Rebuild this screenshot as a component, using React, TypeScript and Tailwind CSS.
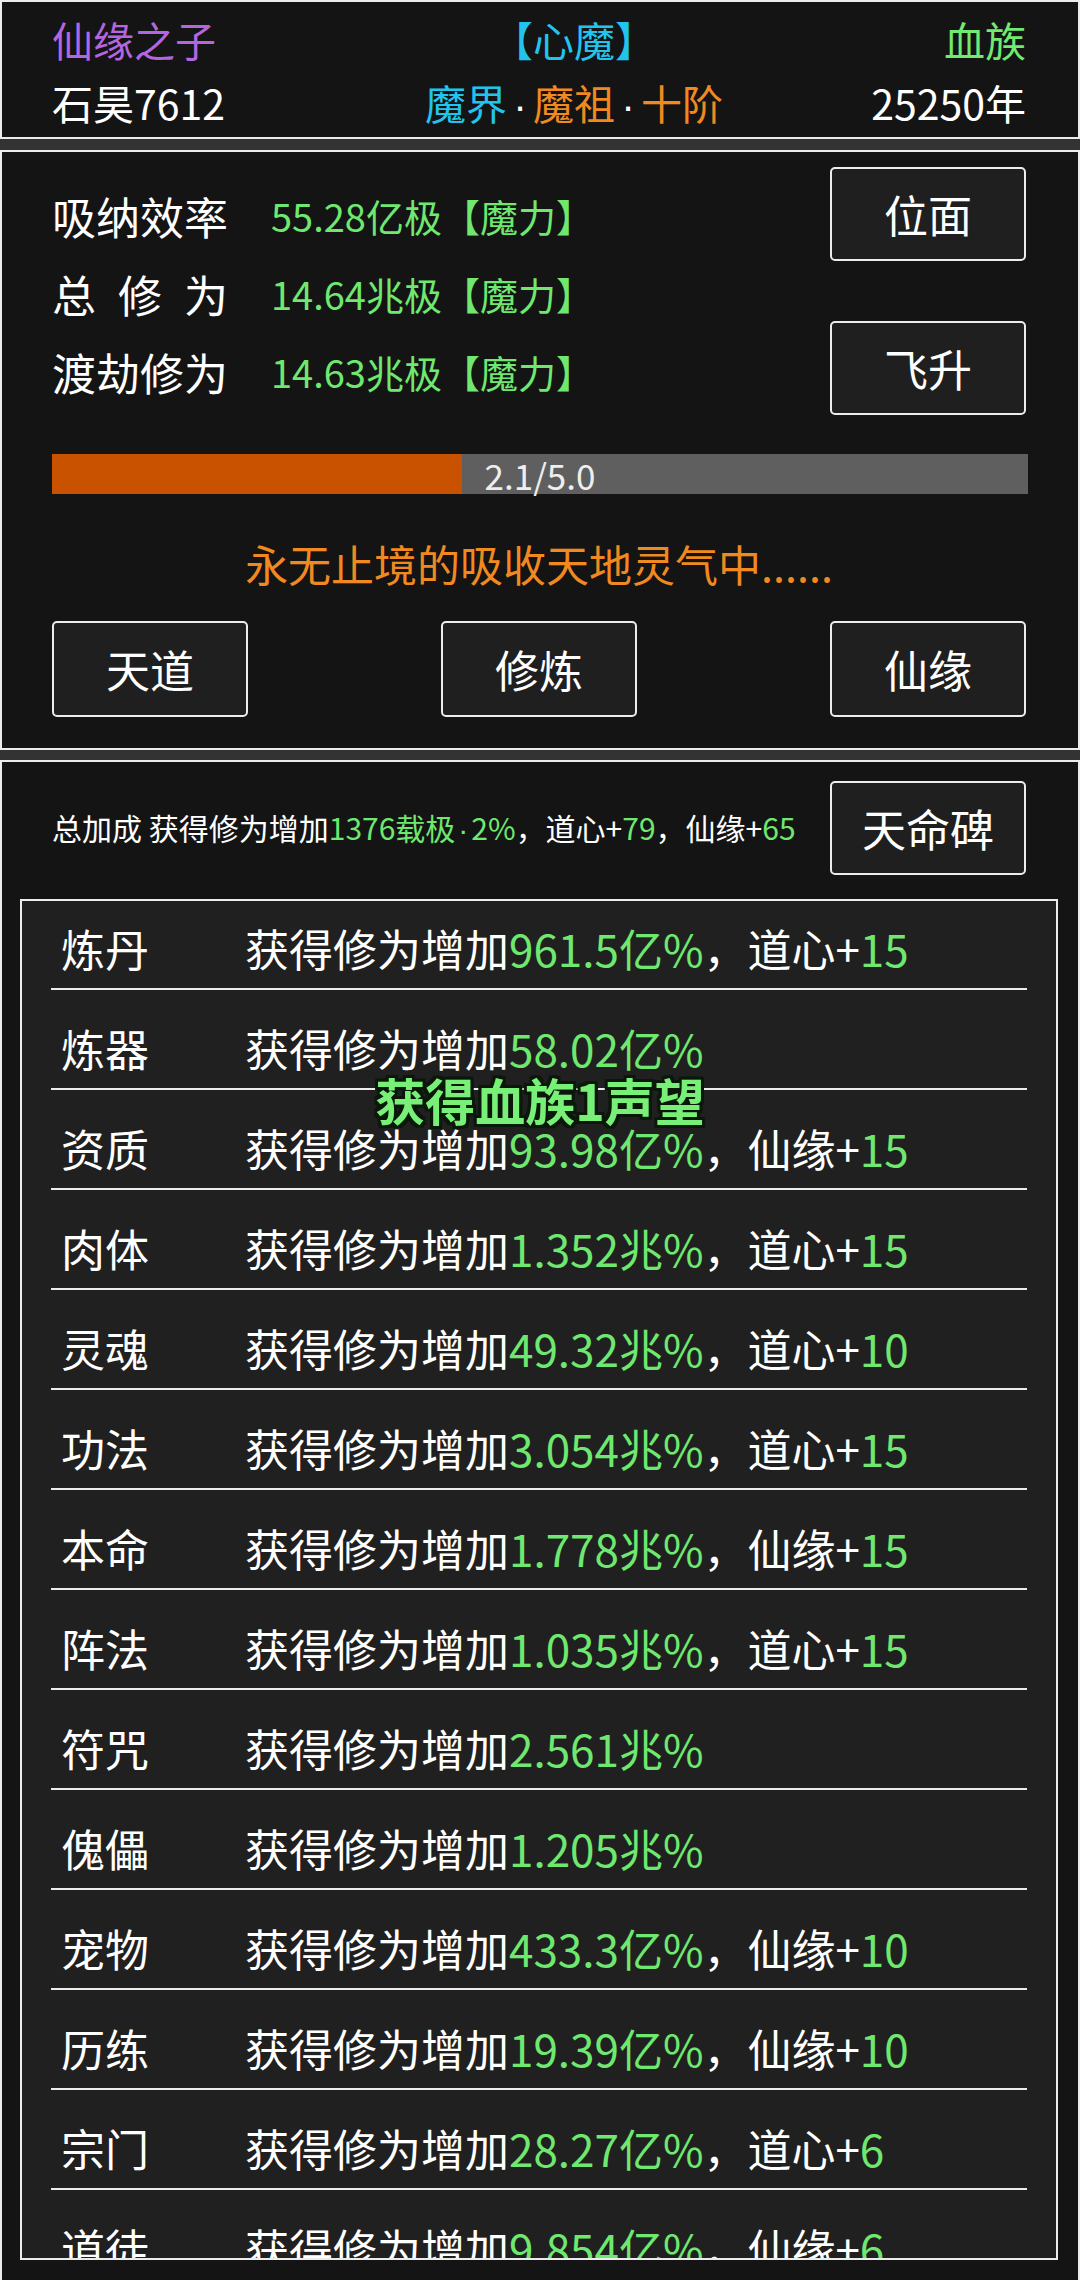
import React from 'react';

type Bonus = { name: string; value: string; extra?: string; extraValue?: string };

const bonuses: Bonus[] = [
  { name: '炼丹', value: '961.5亿%', extra: '道心+', extraValue: '15' },
  { name: '炼器', value: '58.02亿%' },
  { name: '资质', value: '93.98亿%', extra: '仙缘+', extraValue: '15' },
  { name: '肉体', value: '1.352兆%', extra: '道心+', extraValue: '15' },
  { name: '灵魂', value: '49.32兆%', extra: '道心+', extraValue: '10' },
  { name: '功法', value: '3.054兆%', extra: '道心+', extraValue: '15' },
  { name: '本命', value: '1.778兆%', extra: '仙缘+', extraValue: '15' },
  { name: '阵法', value: '1.035兆%', extra: '道心+', extraValue: '15' },
  { name: '符咒', value: '2.561兆%' },
  { name: '傀儡', value: '1.205兆%' },
  { name: '宠物', value: '433.3亿%', extra: '仙缘+', extraValue: '10' },
  { name: '历练', value: '19.39亿%', extra: '仙缘+', extraValue: '10' },
  { name: '宗门', value: '28.27亿%', extra: '道心+', extraValue: '6' },
  { name: '道徒', value: '9.854亿%', extra: '仙缘+', extraValue: '6' },
];

const progress = 2.1 / 5.0;

const GameButton: React.FC<{ label: string; className?: string }> = ({ label, className = '' }) => (
  <button
    className={`w-[196px] h-[94px] flex items-center justify-center bg-[#1f1f1f] border-2 border-[#ececec] rounded-[5px] text-[44px] text-white leading-none ${className}`}
  >
    {label}
  </button>
);

// narrow middle dot, the CJK one is full width
const Dot: React.FC<{ className: string }> = ({ className }) => (
  <span className={`inline-block text-center font-['Liberation_Sans',sans-serif] leading-none ${className}`}>·</span>
);

const App: React.FC = () => {
  return (
    <div className="relative w-[1080px] h-[2280px] overflow-hidden bg-[#333333] font-['Noto_Sans_CJK_SC','Noto_Sans',sans-serif] text-white">
      {/* Header */}
      <div className="bg-[#141414] border-2 border-[#ececec] pl-[50px] pr-[52px] pt-[6px] pb-[3px] text-[41px] leading-[63px] whitespace-nowrap">
        <div className="flex h-[63px]">
          <div className="w-[230px] text-[#b466e0]">仙缘之子</div>
          <div className="flex-1 text-center text-[#22c4ee]">【心魔】</div>
          <div className="w-[160px] text-right text-[#72ea72]">血族</div>
        </div>
        <div className="flex h-[63px]">
          <div className="w-[230px]">石昊7612</div>
          <div className="flex-1 text-center">
            <span className="text-[#22c4ee]">魔界</span>
            <Dot className="w-[26px] text-white" />
            <span className="text-[#f08a20]">魔祖</span>
            <Dot className="w-[26px] text-white" />
            <span className="text-[#f08a20]">十阶</span>
          </div>
          <div className="w-[160px] text-right">25250年</div>
        </div>
      </div>

      {/* Cultivation panel */}
      <div className="mt-[11px] bg-[#141414] border-2 border-[#ececec] pl-[50px] pr-[52px] pb-[31px]">
        <div className="flex justify-between">
          <div className="pt-[25px] leading-[78px]">
            <div className="flex items-center">
              <span className="w-[219px] text-[44px]">吸纳效率</span>
              <span className="text-[38px] text-[#6fe86f]">55.28亿极【魔力】</span>
            </div>
            <div className="flex items-center">
              <span className="w-[219px] text-[44px]">
                <span className="flex w-[176px] justify-between">
                  <span>总</span>
                  <span>修</span>
                  <span>为</span>
                </span>
              </span>
              <span className="text-[38px] text-[#6fe86f]">14.64兆极【魔力】</span>
            </div>
            <div className="flex items-center">
              <span className="w-[219px] text-[44px]">渡劫修为</span>
              <span className="text-[38px] text-[#6fe86f]">14.63兆极【魔力】</span>
            </div>
          </div>
          <div className="pt-[15px] flex flex-col gap-[60px]">
            <GameButton label="位面" />
            <GameButton label="飞升" />
          </div>
        </div>

        <div className="relative mt-[39px] mr-[-2px] h-[40px] bg-[#5f5f5f]">
          <div className="h-full bg-[#c85200]" style={{ width: `${progress * 100}%` }}></div>
          <div className="absolute inset-0 flex items-center justify-center text-[35px] text-[#eeeeee] leading-none">
            2.1/5.0
          </div>
        </div>

        <div className="mt-[45px] text-center text-[43px] leading-[48px] text-[#f08a20]">
          永无止境的吸收天地灵气中......
        </div>

        <div className="mt-[34px] flex justify-between">
          <GameButton label="天道" className="h-[96px]" />
          <GameButton label="修炼" className="h-[96px]" />
          <GameButton label="仙缘" className="h-[96px]" />
        </div>
      </div>

      {/* Bonus panel */}
      <div className="mt-[10px] bg-[#141414] border-2 border-[#ececec] pb-[40px]">
        <div className="mt-[19px] pl-[50px] pr-[52px] flex items-center justify-between">
          <div className="text-[30px] leading-none whitespace-nowrap">
            总加成 获得修为增加<span className="text-[#6fe86f]">1376载极</span>
            <Dot className="w-[16px] text-[#6fe86f]" />
            <span className="text-[#6fe86f]">2%</span>，道心+<span className="text-[#6fe86f]">79</span>，仙缘+
            <span className="text-[#6fe86f]">65</span>
          </div>
          <GameButton label="天命碑" />
        </div>

        <div className="mt-[24px] ml-[18px] mr-[20px] h-[1361px] overflow-hidden bg-[#202020] border-2 border-[#ececec]">
          {bonuses.map((b, i) => (
            <div key={b.name} className="mx-[29px]">
              <div className={`${i === 0 ? 'pt-[17px]' : 'pt-[28px]'} pb-[10px] pl-[10px] flex text-[44px] leading-[60px] whitespace-nowrap`}>
                <span className="w-[184px]">{b.name}</span>
                <span>
                  获得修为增加<span className="text-[#6fe86f]">{b.value}</span>
                  {b.extra && (
                    <>
                      ，{b.extra}
                      <span className="text-[#6fe86f]">{b.extraValue}</span>
                    </>
                  )}
                </span>
              </div>
              <div className="h-[2px] bg-[#ececec]"></div>
            </div>
          ))}
        </div>
      </div>

      {/* Toast */}
      <div className="absolute left-0 right-0 top-[1068px] text-center text-[50px] font-bold leading-[62px] text-[#78f078] [text-shadow:3px_3px_0_#0a180a,-3px_-3px_0_#0a180a,3px_-3px_0_#0a180a,-3px_3px_0_#0a180a,0_3px_0_#0a180a,0_-3px_0_#0a180a,3px_0_0_#0a180a,-3px_0_0_#0a180a]">
        获得血族1声望
      </div>
    </div>
  );
};

export default App;
